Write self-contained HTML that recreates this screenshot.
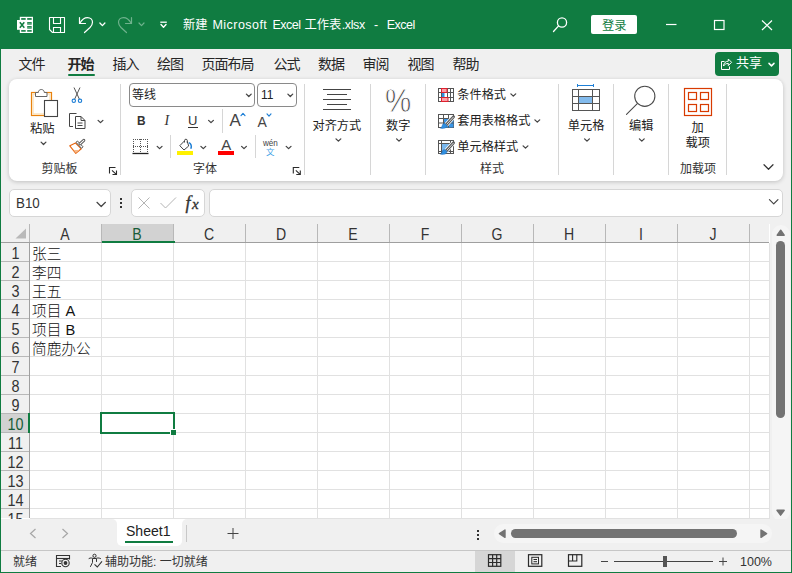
<!DOCTYPE html>
<html lang="zh-CN">
<head>
<meta charset="utf-8">
<title>新建 Microsoft Excel 工作表.xlsx - Excel</title>
<style>
*{box-sizing:border-box;margin:0;padding:0}
html,body{width:792px;height:573px;overflow:hidden;background:#f0f0f0}
body{font-family:"Liberation Sans","Noto Sans CJK SC",sans-serif;color:#262626;font-size:13px}
#app{position:absolute;left:0;top:0;width:792px;height:573px;background:#f0f0f0;overflow:hidden}
.abs{position:absolute}
.t{position:absolute;white-space:nowrap;line-height:1}
svg{position:absolute;overflow:visible}
#bl{left:0;top:0;width:1px;height:573px;background:#107c41}
#br{left:791px;top:0;width:1px;height:573px;background:#107c41}
#bb{left:0;top:572px;width:792px;height:1px;background:#107c41}
#title{left:0;top:0;width:792px;height:49px;background:#107c41}
#title .t{color:#fff}
.tab{font-size:13px;color:#262626}
#ribbon{left:9px;top:79px;width:774px;height:102px;background:#fff;border-radius:8px;box-shadow:0 1px 4px rgba(0,0,0,.2)}
.sep{position:absolute;width:1px;background:#d6d6d6}
.inp{position:absolute;background:#fff;border:1px solid #8a8a8a;border-radius:4px}
.fbox{position:absolute;background:#fff;border:1px solid #d6d6d6;border-radius:5px}
#grid{left:1px;top:224px;width:769px;height:295px;background:#fff;overflow:hidden}
.ch{position:absolute;top:0;height:18px;font-size:16px;color:#333;text-align:center;line-height:21px;transform:scaleX(.88)}
.rh{position:absolute;left:0;width:29px;height:19px;font-size:16px;color:#333;text-align:center;line-height:21px;transform:scaleX(.9)}
.cell{position:absolute;font-size:14.67px;color:#111;font-weight:300;line-height:1;white-space:nowrap}
.vl{top:19px;width:1px;height:275px;background:#e1e1e1}
.hl{left:29px;height:1px;width:739px;background:#e1e1e1}
.hvl{top:0;width:1px;height:18px;background:#b8b8b8}
.hhl{left:0;height:1px;width:28px;background:#b8b8b8}
</style>
</head>
<body>
<div id="app">
<!-- TITLE BAR -->
<div id="title" class="abs">
<svg style="left:0;top:0" width="1" height="1"><rect x="19.800" y="16.800" width="13.200" height="16.200" fill="#fff"/><rect x="21.2" y="18.1" width="4.500" height="1.7" fill="#107c41"/><rect x="21.2" y="22.1" width="4.500" height="2.5" fill="#107c41"/><rect x="21.2" y="26.1" width="4.500" height="2.5" fill="#107c41"/><rect x="21.2" y="30.1" width="4.500" height="1.6" fill="#107c41"/><rect x="27.2" y="18.1" width="4.500" height="1.7" fill="#107c41"/><rect x="27.2" y="22.1" width="4.500" height="2.5" fill="#107c41"/><rect x="27.2" y="26.1" width="4.500" height="2.5" fill="#107c41"/><rect x="27.2" y="30.1" width="4.500" height="1.6" fill="#107c41"/><rect x="27.200" y="23.1" width="4.500" height=".500" fill="#9fd0b4"/><rect x="27.200" y="27.1" width="4.500" height=".500" fill="#9fd0b4"/><rect x="17" y="20" width="9.800" height="9.800" fill="#fff"/><path d="M19.800 22.200L24.300 27.800M24.300 22.200L19.800 27.800" stroke="#107c41" stroke-width="1.500" fill="none"/></svg><svg style="left:0;top:0" width="1" height="1"><path d="M49.5 17.5H64.5V32.5H52.5L49.5 29.5Z" fill="none" stroke="#fff" stroke-width="1.1" stroke-linejoin="round"/><path d="M53.5 17.5V23.5H60.5V17.5" fill="none" stroke="#fff" stroke-width="1.1"/><path d="M53.5 32.5V27.5H60.5V32.5" fill="none" stroke="#fff" stroke-width="1.1"/></svg><svg style="left:0;top:0" width="1" height="1"><path d="M79.5 17.5V23.5H85.5" fill="none" stroke="#fff" stroke-width="1.2" stroke-linecap="round" stroke-linejoin="round"/><path d="M79.8 23.3C82 19.5 85 17.6 87.5 17.6C90.5 17.6 92.5 19.8 92.5 22.3C92.5 24.5 91.5 26 90 27.5L84.5 32.5" fill="none" stroke="#fff" stroke-width="1.2" stroke-linecap="round"/></svg><svg style="left:0;top:0" width="1" height="1"><path d="M99.90 23.00 L102.40 25.60 L104.90 23.00" fill="none" stroke="#fff" stroke-width="1.3" stroke-linecap="round" stroke-linejoin="round"/></svg><svg style="left:0;top:0" width="1" height="1"><path d="M131.5 17.5V23.5H125.5" fill="none" stroke="#6fb28d" stroke-width="1.2" stroke-linecap="round" stroke-linejoin="round"/><path d="M131.2 23.3C129 19.5 126 17.6 123.5 17.6C120.5 17.6 118.5 19.8 118.5 22.3C118.5 24.5 119.5 26 121 27.5L126.5 32.5" fill="none" stroke="#6fb28d" stroke-width="1.2" stroke-linecap="round"/></svg><svg style="left:0;top:0" width="1" height="1"><path d="M139.00 23.00 L141.50 25.60 L144.00 23.00" fill="none" stroke="#6fb28d" stroke-width="1.2" stroke-linecap="round" stroke-linejoin="round"/></svg><svg style="left:0;top:0" width="1" height="1"><path d="M160.300 22.200H166.800" stroke="#fff" stroke-width="1.3" fill="none"/></svg><svg style="left:0;top:0" width="1" height="1"><path d="M161.00 24.60 L163.50 27.20 L166.00 24.60" fill="none" stroke="#fff" stroke-width="1.4" stroke-linecap="round" stroke-linejoin="round"/></svg><div class="t" style="left:183px;top:18.5px;font-size:12.3px;">新建</div><div class="t" style="left:212.5px;top:18.5px;font-size:12.5px;letter-spacing:.45px;">Microsoft</div><div class="t" style="left:272.5px;top:18.5px;font-size:12.5px;letter-spacing:-.54px;">Excel</div><div class="t" style="left:304.5px;top:18.5px;font-size:12.3px;">工作表</div><div class="t" style="left:341.8px;top:18.5px;font-size:12.5px;letter-spacing:-.4px;">.xlsx</div><div class="t" style="left:374px;top:18.5px;font-size:12.5px;">-</div><div class="t" style="left:386.8px;top:18.5px;font-size:12.5px;letter-spacing:-.54px;">Excel</div><svg style="left:0;top:0" width="1" height="1"><circle cx="562" cy="22.5" r="4.6" fill="none" stroke="#fff" stroke-width="1.3"/><path d="M558.6 25.9L553.5 31.5" stroke="#fff" stroke-width="1.3" stroke-linecap="round"/></svg><div class="abs" style="left:591px;top:15px;width:46px;height:18.5px;background:#fff;border-radius:2px"></div><div class="t" style="left:602px;top:19.5px;font-size:12.3px;color:#107c41;">登录</div><svg style="left:0;top:0" width="1" height="1"><path d="M666 24.5H676.5" stroke="#fff" stroke-width="1.2"/><rect x="714.5" y="20.5" width="9.5" height="9" fill="none" stroke="#fff" stroke-width="1.2"/><path d="M762 20.5L772 30M772 20.5L762 30" stroke="#fff" stroke-width="1.2"/></svg></div>
<!-- TAB ROW -->
<div class="t" style="left:18.5px;top:57.3px;font-size:14px;color:#262626;letter-spacing:-1px;">文件</div><div class="t" style="left:67.5px;top:57.3px;font-size:14px;color:#262626;font-weight:bold;letter-spacing:-1px;">开始</div><div class="t" style="left:112.5px;top:57.3px;font-size:14px;color:#262626;letter-spacing:-1px;">插入</div><div class="t" style="left:157.0px;top:57.3px;font-size:14px;color:#262626;letter-spacing:-1px;">绘图</div><div class="t" style="left:201.5px;top:57.3px;font-size:14px;color:#262626;letter-spacing:-1px;">页面布局</div><div class="t" style="left:273.5px;top:57.3px;font-size:14px;color:#262626;letter-spacing:-1px;">公式</div><div class="t" style="left:318.0px;top:57.3px;font-size:14px;color:#262626;letter-spacing:-1px;">数据</div><div class="t" style="left:362.5px;top:57.3px;font-size:14px;color:#262626;letter-spacing:-1px;">审阅</div><div class="t" style="left:407.5px;top:57.3px;font-size:14px;color:#262626;letter-spacing:-1px;">视图</div><div class="t" style="left:452.5px;top:57.3px;font-size:14px;color:#262626;letter-spacing:-1px;">帮助</div><div class="abs" style="left:68px;top:73.5px;width:26.5px;height:2.3px;background:#107c41;border-radius:1px"></div><div class="abs" style="left:715px;top:52px;width:64px;height:24px;background:#107c41;border-radius:4px"></div><svg style="left:0;top:0" width="1" height="1"><path d="M724.5 61.5H721.5V69.5H729.5V66.5" fill="none" stroke="#fff" stroke-width="1"/><path d="M723.5 66C723.8 62.8 725.8 61.2 728.3 61.2V59L731.6 62.3L728.3 65.6V63.4C726.3 63.4 724.8 64.2 723.5 66Z" fill="none" stroke="#fff" stroke-width="1" stroke-linejoin="round"/></svg><div class="t" style="left:736px;top:56px;font-size:13px;color:#fff;">共享</div><svg style="left:0;top:0" width="1" height="1"><path d="M769.00 63.35 L771.50 65.85 L774.00 63.35" fill="none" stroke="#fff" stroke-width="1.5" stroke-linecap="round" stroke-linejoin="round"/></svg><!-- RIBBON -->
<div id="ribbon" class="abs"></div>
<svg style="left:0;top:0" width="1" height="1"><rect x="31.500" y="92.500" width="20" height="23" fill="#fff" stroke="#e8820e" stroke-width="1.2"/><rect x="33" y="94" width="17" height="20" fill="none" stroke="#fbdcae" stroke-width="1.2"/><path d="M35.500 96.500V92.500H38.300C38.300 88.500 44.300 88.500 44.300 92.500H47V96.500Z" fill="#fff" stroke="#666" stroke-width="1"/><rect x="44.5" y="100.500" width="13" height="16" fill="#fff" stroke="#444" stroke-width="1.1"/></svg><div class="t" style="left:30px;top:122.5px;font-size:12.3px;color:#222;">粘贴</div><svg style="left:0;top:0" width="1" height="1"><path d="M41.10 142.15 L43.50 144.45 L45.90 142.15" fill="none" stroke="#444" stroke-width="1.3" stroke-linecap="round" stroke-linejoin="round"/></svg><svg style="left:0;top:0" width="1" height="1"><path d="M74 87.500L79.300 99M80 87.500L74.700 99" stroke="#555" stroke-width="1" fill="none"/><circle cx="73.800" cy="100.800" r="1.700" fill="none" stroke="#1e7fd6" stroke-width="1.1"/><circle cx="80" cy="100.800" r="1.700" fill="none" stroke="#1e7fd6" stroke-width="1.1"/></svg><svg style="left:0;top:0" width="1" height="1"><path d="M73 126.500H69.500V113.500H76.500" fill="none" stroke="#444" stroke-width="1"/><path d="M75.500 116.500H81L85 120.500V128.500H75.500Z" fill="#fff" stroke="#444" stroke-width="1" stroke-linejoin="round"/><path d="M81 116.500V120.500H85" fill="none" stroke="#444" stroke-width="1"/><path d="M77.500 123H82.500M77.500 125.500H82.500" stroke="#444" stroke-width="1"/></svg><svg style="left:0;top:0" width="1" height="1"><path d="M98.10 120.35 L100.50 122.65 L102.90 120.35" fill="none" stroke="#444" stroke-width="1.3" stroke-linecap="round" stroke-linejoin="round"/></svg><svg style="left:0;top:0" width="1" height="1"><path d="M69.800 145.800L75.500 143L81.300 148.800L75.800 153.300Z" fill="#fff" stroke="#e8650e" stroke-width="1.1" stroke-linejoin="round"/><path d="M73.500 150L79.500 150L75.800 153Z" fill="#f7b98a" stroke="none"/><path d="M76 142.300L77.500 141L83 146.800L81.500 148.300Z" fill="#fff" stroke="#555" stroke-width="1" stroke-linejoin="round"/><path d="M80 143.800L83.800 140.300" stroke="#555" stroke-width="3" stroke-linecap="round"/><path d="M80 143.800L83.800 140.300" stroke="#fff" stroke-width="1.1" stroke-linecap="round"/></svg><div class="t" style="left:41.5px;top:163px;font-size:12px;color:#333;">剪贴板</div><svg style="left:0;top:0" width="1" height="1"><path d="M109.5 173.5V167.5H115.5" fill="none" stroke="#2a2a2a" stroke-width="1.1"/><path d="M112.0 170.3L116.3 174.3M116.5 170.5V174.5H112.5" fill="none" stroke="#2a2a2a" stroke-width="1.1"/></svg><div class="sep" style="left:120px;top:84px;height:91px"></div><div class="inp" style="left:129px;top:83px;width:126px;height:24px"></div><div class="t" style="left:132px;top:89px;font-size:12px;color:#222;">等线</div><svg style="left:0;top:0" width="1" height="1"><path d="M246.40 94.15 L248.80 96.45 L251.20 94.15" fill="none" stroke="#444" stroke-width="1.3" stroke-linecap="round" stroke-linejoin="round"/></svg><div class="inp" style="left:257px;top:83px;width:40px;height:24px"></div><div class="t" style="left:261px;top:89px;font-size:12px;color:#222;">11</div><svg style="left:0;top:0" width="1" height="1"><path d="M287.90 94.15 L290.30 96.45 L292.70 94.15" fill="none" stroke="#444" stroke-width="1.3" stroke-linecap="round" stroke-linejoin="round"/></svg><div class="t" style="left:137px;top:113.5px;font-size:13.5px;color:#333;font-weight:bold;transform-origin:0 0;transform:scaleX(.88);">B</div><div class="t" style="left:164.5px;top:113.5px;font-size:14px;color:#333;font-style:italic;font-family:'Liberation Serif',serif;">I</div><div class="t" style="left:188px;top:114px;font-size:13px;color:#333;">U</div><div class="abs" style="left:187.5px;top:127px;width:10px;height:1px;background:#333;"></div><svg style="left:0;top:0" width="1" height="1"><path d="M208.60 120.35 L211.00 122.65 L213.40 120.35" fill="none" stroke="#444" stroke-width="1.3" stroke-linecap="round" stroke-linejoin="round"/></svg><div class="sep" style="left:222px;top:109px;height:24px"></div><div class="t" style="left:229.5px;top:111.5px;font-size:17px;color:#444;">A</div><svg style="left:0;top:0" width="1" height="1"><path d="M241.00 115.60 L243.00 113.40 L245.00 115.60" fill="none" stroke="#1e7fd6" stroke-width="1.2" stroke-linecap="round" stroke-linejoin="round"/></svg><div class="t" style="left:257.5px;top:114.5px;font-size:14px;color:#444;">A</div><svg style="left:0;top:0" width="1" height="1"><path d="M267.00 113.90 L269.00 116.10 L271.00 113.90" fill="none" stroke="#1e7fd6" stroke-width="1.2" stroke-linecap="round" stroke-linejoin="round"/></svg><svg style="left:0;top:0" width="1" height="1"><path d="M133.500 139V153M147.500 139V153M133 139.500H148M140.500 139V153M133 146.500H148" stroke="#555" stroke-width="1" stroke-dasharray="1 1" fill="none"/><path d="M132.500 153.500H148.500" stroke="#222" stroke-width="1.3"/></svg><svg style="left:0;top:0" width="1" height="1"><path d="M157.20 146.35 L159.60 148.65 L162.00 146.35" fill="none" stroke="#444" stroke-width="1.3" stroke-linecap="round" stroke-linejoin="round"/></svg><div class="sep" style="left:170px;top:135px;height:23px"></div><svg style="left:0;top:0" width="1" height="1"><path d="M184.600 140.800L179.800 145.700L184 150L188.700 146L187.300 141.500" fill="#fff" stroke="#444" stroke-width="1" stroke-linejoin="round"/><path d="M184.500 142.500V140.500C184.500 138.800 187.300 138.800 187.300 140.500V143" fill="none" stroke="#444" stroke-width="1"/><path d="M188.800 142.600C191 143.300 192 146 190.800 148.800" fill="none" stroke="#1e7fd6" stroke-width="1.5"/><rect x="177" y="151" width="16" height="4" fill="#fff100"/></svg><svg style="left:0;top:0" width="1" height="1"><path d="M200.90 146.35 L203.30 148.65 L205.70 146.35" fill="none" stroke="#444" stroke-width="1.3" stroke-linecap="round" stroke-linejoin="round"/></svg><div class="t" style="left:221.3px;top:137.3px;font-size:15px;color:#444;">A</div><div class="abs" style="left:218px;top:151px;width:16px;height:4px;background:#f00;"></div><svg style="left:0;top:0" width="1" height="1"><path d="M241.60 146.35 L244.00 148.65 L246.40 146.35" fill="none" stroke="#444" stroke-width="1.3" stroke-linecap="round" stroke-linejoin="round"/></svg><div class="sep" style="left:255px;top:135px;height:23px"></div><div class="t" style="left:262.5px;top:138.8px;font-size:9px;color:#444;transform-origin:0 0;transform:scaleX(.9);">wén</div><div class="t" style="left:266px;top:147.6px;font-size:8.5px;color:#3f9fe6;">文</div><svg style="left:0;top:0" width="1" height="1"><path d="M286.20 146.35 L288.60 148.65 L291.00 146.35" fill="none" stroke="#444" stroke-width="1.3" stroke-linecap="round" stroke-linejoin="round"/></svg><div class="t" style="left:193px;top:163px;font-size:12px;color:#333;">字体</div><svg style="left:0;top:0" width="1" height="1"><path d="M293.3 173.5V167.5H299.3" fill="none" stroke="#2a2a2a" stroke-width="1.1"/><path d="M295.8 170.3L300.1 174.3M300.3 170.5V174.5H296.3" fill="none" stroke="#2a2a2a" stroke-width="1.1"/></svg><div class="sep" style="left:304px;top:84px;height:91px"></div><svg style="left:0;top:0" width="1" height="1"><path d="M323 89.500H351M327 94.500H347M323 99.500H351M327 104.500H347M323 109.500H351" stroke="#444" stroke-width="1" fill="none"/></svg><div class="t" style="left:312.5px;top:120px;font-size:12.2px;color:#222;">对齐方式</div><svg style="left:0;top:0" width="1" height="1"><path d="M336.00 138.85 L338.40 141.15 L340.80 138.85" fill="none" stroke="#444" stroke-width="1.3" stroke-linecap="round" stroke-linejoin="round"/></svg><div class="sep" style="left:370px;top:84px;height:91px"></div><div class="t" style="left:385.2px;top:83.5px;font-size:33.5px;color:#3a3a3a;-webkit-text-stroke:.9px #fff;transform-origin:0 0;transform:scaleX(.88);">%</div><div class="t" style="left:386px;top:120px;font-size:12.2px;color:#222;">数字</div><svg style="left:0;top:0" width="1" height="1"><path d="M396.60 138.85 L399.00 141.15 L401.40 138.85" fill="none" stroke="#444" stroke-width="1.3" stroke-linecap="round" stroke-linejoin="round"/></svg><div class="sep" style="left:425px;top:84px;height:91px"></div><svg style="left:0;top:0" width="1" height="1"><rect x="438.500" y="88.500" width="15" height="13" fill="#fff" stroke="#555" stroke-width="1"/><path d="M438.500 92.500H453.500M438.500 97.500H453.500M441.500 88.500V101.500M447.500 88.500V101.500M450.500 88.500V101.500" stroke="#555" stroke-width="1"/><rect x="441.500" y="88.500" width="5.500" height="4" fill="#f8a0a8" stroke="#e0202e" stroke-width="1"/><rect x="441.500" y="97.500" width="6.500" height="4" fill="#f8a0a8" stroke="#e0202e" stroke-width="1"/><rect x="442" y="93" width="2.500" height="4" fill="#2f8fe0"/></svg><div class="t" style="left:457.3px;top:89px;font-size:12.2px;color:#222;">条件格式</div><svg style="left:0;top:0" width="1" height="1"><path d="M510.90 93.85 L513.30 96.15 L515.70 93.85" fill="none" stroke="#444" stroke-width="1.3" stroke-linecap="round" stroke-linejoin="round"/></svg><svg style="left:0;top:0" width="1" height="1"><rect x="438.500" y="114.500" width="15" height="13" fill="#fff" stroke="#555" stroke-width="1"/><rect x="444" y="119" width="9.500" height="8.500" fill="#3a96e6"/><path d="M438.500 118.500H453.500M438.500 123H453.500M443.500 114.500V127.500M448.500 114.500V127.500" stroke="#555" stroke-width="1"/><path d="M446.300 124.8L453.600 116.8" stroke="#fff" stroke-width="4.4" stroke-linecap="butt"/><path d="M446.300 124.8L453.600 116.8" stroke="#5a5a5a" stroke-width="2.8" stroke-linecap="round"/><path d="M446.800 124.3L453.300 117.2" stroke="#e8e8e8" stroke-width=".9" stroke-linecap="round"/><path d="M443 124.0C444.300 123.3 446.300 124.0 446.800 125.5C447.300 127.5 444.500 128.8 440.500 128.3C442 127.3 442 125.3 443 124.0Z" fill="#2f8fe0" stroke="#1e6fc0" stroke-width=".5"/></svg><div class="t" style="left:457.3px;top:115px;font-size:12.2px;color:#222;">套用表格格式</div><svg style="left:0;top:0" width="1" height="1"><path d="M534.90 119.85 L537.30 122.15 L539.70 119.85" fill="none" stroke="#444" stroke-width="1.3" stroke-linecap="round" stroke-linejoin="round"/></svg><svg style="left:0;top:0" width="1" height="1"><rect x="438.500" y="140.500" width="15" height="13" fill="#fff" stroke="#555" stroke-width="1"/><rect x="441.500" y="143.500" width="9" height="8" fill="#7ab8ee"/><path d="M438.500 143.500H453.500M441.500 140.500V153.500M450.500 140.500V153.500M438.500 151.500H453.500" stroke="#555" stroke-width="1"/><path d="M446.300 150.8L453.600 142.8" stroke="#fff" stroke-width="4.4" stroke-linecap="butt"/><path d="M446.300 150.8L453.600 142.8" stroke="#5a5a5a" stroke-width="2.8" stroke-linecap="round"/><path d="M446.800 150.3L453.300 143.2" stroke="#e8e8e8" stroke-width=".9" stroke-linecap="round"/><path d="M443 150.0C444.300 149.3 446.300 150.0 446.800 151.5C447.300 153.5 444.500 154.8 440.500 154.3C442 153.3 442 151.3 443 150.0Z" fill="#2f8fe0" stroke="#1e6fc0" stroke-width=".5"/></svg><div class="t" style="left:457.3px;top:141px;font-size:12.2px;color:#222;">单元格样式</div><svg style="left:0;top:0" width="1" height="1"><path d="M523.10 145.85 L525.50 148.15 L527.90 145.85" fill="none" stroke="#444" stroke-width="1.3" stroke-linecap="round" stroke-linejoin="round"/></svg><div class="t" style="left:480px;top:162.5px;font-size:12px;color:#333;">样式</div><div class="sep" style="left:558px;top:84px;height:91px"></div><svg style="left:0;top:0" width="1" height="1"><path d="M577 85.500H594M577.500 84V87M593.500 84V87" stroke="#1e7fd6" stroke-width="1" fill="none"/><rect x="572.500" y="89.500" width="27" height="21" fill="#fff" stroke="#555" stroke-width="1"/><path d="M572.500 96.500H599.500M572.500 103.500H599.500M578.500 89.500V110.500M592.500 89.500V110.500" stroke="#555" stroke-width="1"/><rect x="579" y="97" width="13" height="6" fill="#83bbed"/></svg><div class="t" style="left:567.8px;top:120px;font-size:12.2px;color:#222;">单元格</div><svg style="left:0;top:0" width="1" height="1"><path d="M584.60 138.85 L587.00 141.15 L589.40 138.85" fill="none" stroke="#444" stroke-width="1.3" stroke-linecap="round" stroke-linejoin="round"/></svg><div class="sep" style="left:613px;top:84px;height:91px"></div><svg style="left:0;top:0" width="1" height="1"><circle cx="644.800" cy="96.300" r="10.100" fill="none" stroke="#4a4a4a" stroke-width="1.1"/><path d="M637.300 103.600L626.500 114.400" stroke="#4a4a4a" stroke-width="1.1" stroke-linecap="round"/></svg><div class="t" style="left:629px;top:120px;font-size:12.2px;color:#222;">编辑</div><svg style="left:0;top:0" width="1" height="1"><path d="M639.40 138.85 L641.80 141.15 L644.20 138.85" fill="none" stroke="#444" stroke-width="1.3" stroke-linecap="round" stroke-linejoin="round"/></svg><div class="sep" style="left:668px;top:84px;height:91px"></div><svg style="left:0;top:0" width="1" height="1"><rect x="684.500" y="88.500" width="27" height="27" fill="#fff" stroke="#d83b01" stroke-width="1.2"/><rect x="688.5" y="92.5" width="8" height="7" fill="none" stroke="#d83b01" stroke-width="1.2"/><rect x="688.5" y="104.5" width="8" height="7" fill="none" stroke="#d83b01" stroke-width="1.2"/><rect x="700.5" y="92.5" width="8" height="7" fill="none" stroke="#d83b01" stroke-width="1.2"/><rect x="700.5" y="104.5" width="8" height="7" fill="none" stroke="#d83b01" stroke-width="1.2"/></svg><div class="t" style="left:691.5px;top:122px;font-size:12.2px;color:#222;">加</div><div class="t" style="left:685.5px;top:136.5px;font-size:12.2px;color:#222;">载项</div><div class="t" style="left:680px;top:162.5px;font-size:12px;color:#333;">加载项</div><div class="sep" style="left:726px;top:84px;height:91px"></div><svg style="left:0;top:0" width="1" height="1"><path d="M764.00 164.75 L768.50 169.25 L773.00 164.75" fill="none" stroke="#333" stroke-width="1.2" stroke-linecap="round" stroke-linejoin="round"/></svg><!-- FORMULA BAR -->
<div class="fbox" style="left:9px;top:189px;width:102px;height:27.5px"></div><div class="t" style="left:16.3px;top:195.3px;font-size:15px;color:#333;transform-origin:0 0;transform:scaleX(.89);">B10</div><svg style="left:0;top:0" width="1" height="1"><path d="M96.95 202.30 L101.20 206.50 L105.45 202.30" fill="none" stroke="#444" stroke-width="1.2" stroke-linecap="round" stroke-linejoin="round"/></svg><div class="abs" style="left:120px;top:198px;width:2px;height:2px;background:#333;"></div><div class="abs" style="left:120px;top:202px;width:2px;height:2px;background:#333;"></div><div class="abs" style="left:120px;top:206px;width:2px;height:2px;background:#333;"></div><div class="fbox" style="left:131px;top:189px;width:73.5px;height:27.5px"></div><svg style="left:0;top:0" width="1" height="1"><path d="M138.500 197.500L149.500 208.500M149.500 197.500L138.500 208.500" stroke="#b4b4b4" stroke-width="1" fill="none"/><path d="M160.500 203L165.500 208L176 197.500" stroke="#b4b4b4" stroke-width="1" fill="none"/></svg><div class="t" style="left:185.5px;top:193.5px;font-size:18px;color:#333;-webkit-text-stroke:.35px #333;font-style:italic;font-family:'Liberation Serif',serif;">f</div><div class="t" style="left:192px;top:196.5px;font-size:15px;color:#333;-webkit-text-stroke:.35px #333;font-style:italic;font-family:'Liberation Serif',serif;">x</div><div class="fbox" style="left:209px;top:189px;width:573.5px;height:27.5px"></div><svg style="left:0;top:0" width="1" height="1"><path d="M769.45 199.65 L773.70 203.95 L777.95 199.65" fill="none" stroke="#444" stroke-width="1.2" stroke-linecap="round" stroke-linejoin="round"/></svg><!-- GRID -->
<div id="grid" class="abs">
<div class="abs" style="left:0;top:0;width:768px;height:18px;background:#f0f0f0"></div>
<div class="abs" style="left:0;top:18px;width:29px;height:276px;background:#f0f0f0"></div>
<div class="abs" style="left:101px;top:0;width:72px;height:18px;background:#d2d2d2"></div>
<div class="abs" style="left:0;top:190px;width:28px;height:19px;background:#d2d2d2"></div>
<div class="abs vl" style="left:100px"></div>
<div class="abs vl" style="left:172px"></div>
<div class="abs vl" style="left:244px"></div>
<div class="abs vl" style="left:316px"></div>
<div class="abs vl" style="left:388px"></div>
<div class="abs vl" style="left:460px"></div>
<div class="abs vl" style="left:532px"></div>
<div class="abs vl" style="left:604px"></div>
<div class="abs vl" style="left:676px"></div>
<div class="abs vl" style="left:748px"></div>
<div class="abs hl" style="top:37px"></div>
<div class="abs hl" style="top:56px"></div>
<div class="abs hl" style="top:75px"></div>
<div class="abs hl" style="top:94px"></div>
<div class="abs hl" style="top:113px"></div>
<div class="abs hl" style="top:132px"></div>
<div class="abs hl" style="top:151px"></div>
<div class="abs hl" style="top:170px"></div>
<div class="abs hl" style="top:189px"></div>
<div class="abs hl" style="top:208px"></div>
<div class="abs hl" style="top:227px"></div>
<div class="abs hl" style="top:246px"></div>
<div class="abs hl" style="top:265px"></div>
<div class="abs hl" style="top:284px"></div>
<div class="abs hvl" style="left:28px"></div>
<div class="abs hvl" style="left:100px"></div>
<div class="abs hvl" style="left:172px"></div>
<div class="abs hvl" style="left:244px"></div>
<div class="abs hvl" style="left:316px"></div>
<div class="abs hvl" style="left:388px"></div>
<div class="abs hvl" style="left:460px"></div>
<div class="abs hvl" style="left:532px"></div>
<div class="abs hvl" style="left:604px"></div>
<div class="abs hvl" style="left:676px"></div>
<div class="abs hvl" style="left:748px"></div>
<div class="abs hhl" style="top:37px"></div>
<div class="abs hhl" style="top:56px"></div>
<div class="abs hhl" style="top:75px"></div>
<div class="abs hhl" style="top:94px"></div>
<div class="abs hhl" style="top:113px"></div>
<div class="abs hhl" style="top:132px"></div>
<div class="abs hhl" style="top:151px"></div>
<div class="abs hhl" style="top:170px"></div>
<div class="abs hhl" style="top:189px"></div>
<div class="abs hhl" style="top:208px"></div>
<div class="abs hhl" style="top:227px"></div>
<div class="abs hhl" style="top:246px"></div>
<div class="abs hhl" style="top:265px"></div>
<div class="abs hhl" style="top:284px"></div>
<div class="abs" style="left:0;top:18px;width:768px;height:1px;background:#9f9f9f"></div>
<div class="abs" style="left:28px;top:18px;width:1px;height:276px;background:#9f9f9f"></div>
<div class="abs" style="left:768px;top:19px;width:1px;height:276px;background:#e1e1e1"></div>
<div class="abs" style="left:29px;top:294px;width:740px;height:1px;background:#e1e1e1"></div>
<svg style="left:0;top:0" width="1" height="1"><path d="M25 4.500V14.500H14.500Z" fill="#b9b9b9"/></svg>
<div class="abs" style="left:101px;top:17px;width:73px;height:2px;background:#107c41"></div>
<div class="abs" style="left:27px;top:189px;width:2px;height:20px;background:#107c41"></div>
<div class="ch" style="left:28px;width:72px;color:#333">A</div>
<div class="ch" style="left:100px;width:72px;color:#185c37">B</div>
<div class="ch" style="left:172px;width:72px;color:#333">C</div>
<div class="ch" style="left:244px;width:72px;color:#333">D</div>
<div class="ch" style="left:316px;width:72px;color:#333">E</div>
<div class="ch" style="left:388px;width:72px;color:#333">F</div>
<div class="ch" style="left:460px;width:72px;color:#333">G</div>
<div class="ch" style="left:532px;width:72px;color:#333">H</div>
<div class="ch" style="left:604px;width:72px;color:#333">I</div>
<div class="ch" style="left:676px;width:72px;color:#333">J</div>
<div class="rh" style="top:19px;color:#333">1</div>
<div class="rh" style="top:38px;color:#333">2</div>
<div class="rh" style="top:57px;color:#333">3</div>
<div class="rh" style="top:76px;color:#333">4</div>
<div class="rh" style="top:95px;color:#333">5</div>
<div class="rh" style="top:114px;color:#333">6</div>
<div class="rh" style="top:133px;color:#333">7</div>
<div class="rh" style="top:152px;color:#333">8</div>
<div class="rh" style="top:171px;color:#333">9</div>
<div class="rh" style="top:190px;color:#185c37">10</div>
<div class="rh" style="top:209px;color:#333">11</div>
<div class="rh" style="top:228px;color:#333">12</div>
<div class="rh" style="top:247px;color:#333">13</div>
<div class="rh" style="top:266px;color:#333">14</div>
<div class="rh" style="top:285px;color:#333">15</div>
<div class="cell" style="left:31px;top:23px">张三</div>
<div class="cell" style="left:31px;top:42px">李四</div>
<div class="cell" style="left:31px;top:61px">王五</div>
<div class="cell" style="left:31px;top:80px">项目 A</div>
<div class="cell" style="left:31px;top:99px">项目 B</div>
<div class="cell" style="left:31px;top:118px">简鹿办公</div>
<div class="abs" style="left:99px;top:188px;width:75px;height:22px;border:2px solid #107c41"></div>
<div class="abs" style="left:169px;top:205px;width:5px;height:5px;background:#107c41;border:1px solid #fff;box-sizing:content-box;border-right:0;border-bottom:0"></div>
</div>
<div class="abs" style="left:772px;top:225px;width:18px;height:296px;background:#f5f5f5;border-radius:9px"></div><svg style="left:0;top:0" width="1" height="1"><path d="M777.200 235.200L780.700 230.200L784.200 235.200Z" fill="#737373" stroke="#737373" stroke-width="1.4" stroke-linejoin="round"/><path d="M777 510.300L780.600 515.200L784.200 510.300Z" fill="#737373" stroke="#737373" stroke-width="1.4" stroke-linejoin="round"/></svg><div class="abs" style="left:776px;top:240.5px;width:9px;height:177.5px;background:#737373;border-radius:4.5px"></div><!-- SHEET TABS -->
<div class="abs" style="left:1px;top:519px;width:790px;height:6px;background:#fff;"></div><div class="abs" style="left:1px;top:519px;width:115.5px;height:31px;background:#f0f0f0;border-radius:0 5px 0 0"></div><div class="abs" style="left:181.5px;top:519px;width:609.5px;height:31px;background:#f0f0f0;border-radius:5px 0 0 0"></div><div class="abs" style="left:116.5px;top:519px;width:65px;height:27.3px;background:#fff;border-radius:0 0 5px 5px"></div><div class="t" style="left:126px;top:522.5px;font-size:15.5px;color:#222;transform-origin:0 0;transform:scaleX(.905);">Sheet1</div><div class="abs" style="left:124.8px;top:540.5px;width:48.3px;height:2px;background:#107c41;"></div><svg style="left:0;top:0" width="1" height="1"><path d="M35.500 529L30.500 533.500L35.500 538" fill="none" stroke="#a6a6a6" stroke-width="1.2"/><path d="M62.500 529L67.500 533.500L62.500 538" fill="none" stroke="#a6a6a6" stroke-width="1.2"/><path d="M227.500 533.500H238.500M233 528V539" fill="none" stroke="#444" stroke-width="1"/></svg><div class="abs" style="left:185.5px;top:525px;width:1px;height:17px;background:#c8c8c8;"></div><div class="abs" style="left:477px;top:530px;width:2px;height:2px;background:#333;"></div><div class="abs" style="left:477px;top:534px;width:2px;height:2px;background:#333;"></div><div class="abs" style="left:477px;top:538px;width:2px;height:2px;background:#333;"></div><div class="abs" style="left:494px;top:524px;width:278px;height:19px;background:#f5f5f5;border-radius:9.5px"></div><svg style="left:0;top:0" width="1" height="1"><path d="M505 530L499.400 533.600L505 537.300Z" fill="#737373" stroke="#737373" stroke-width="1.4" stroke-linejoin="round"/><path d="M761 530L766.600 533.600L761 537.300Z" fill="#737373" stroke="#737373" stroke-width="1.4" stroke-linejoin="round"/></svg><div class="abs" style="left:510.7px;top:528.7px;width:226.3px;height:9.5px;background:#737373;border-radius:5px"></div><!-- STATUS BAR -->
<div class="abs" style="left:1px;top:550px;width:790px;height:1px;background:#c6c6c6;"></div><div class="t" style="left:13px;top:555.5px;font-size:12px;color:#333;">就绪</div><svg style="left:0;top:0" width="1" height="1"><path d="M61 566.500H56.500V555.500H69.500V559.500" stroke="#333" stroke-width="1.1" fill="none"/><path d="M56.500 558.500H69.500" stroke="#333" stroke-width="1.1" fill="none"/><path d="M59 561H62M59 563.500H61" stroke="#333" stroke-width="1" fill="none"/><circle cx="65.500" cy="563" r="3.700" fill="none" stroke="#333" stroke-width="1.1"/><circle cx="65.500" cy="563" r="1.900" fill="#333"/></svg><svg style="left:0;top:0" width="1" height="1"><circle cx="94.500" cy="555.800" r="1.600" fill="none" stroke="#333" stroke-width="1"/><path d="M89 558.500C90.500 557.500 92 558 93 558.500H96C97 558 98.500 557.500 100.500 558.500" stroke="#333" stroke-width="1" fill="none" stroke-linecap="round"/><path d="M92.500 559V562.500L90.500 566.500M96.500 559V561.500" stroke="#333" stroke-width="1" fill="none" stroke-linecap="round"/><path d="M94.500 564.300L97.300 567L102 561.300" stroke="#333" stroke-width="1.1" fill="none"/></svg><div class="t" style="left:105px;top:555.5px;font-size:12px;color:#333;">辅助功能: 一切就绪</div><div class="abs" style="left:475px;top:551px;width:40px;height:21px;background:#d6d6d6;"></div><svg style="left:0;top:0" width="1" height="1"><rect x="488.500" y="554.700" width="12.300" height="11.600" fill="none" stroke="#2a2a2a" stroke-width="1.2"/><path d="M488.500 558.600H500.800M488.500 562.500H500.800M492.600 554.700V566.300M496.700 554.700V566.300" stroke="#2a2a2a" stroke-width="1.2"/></svg><svg style="left:0;top:0" width="1" height="1"><rect x="528.500" y="554.700" width="13.300" height="11.600" fill="none" stroke="#2a2a2a" stroke-width="1.2"/><rect x="531.800" y="557.300" width="6.700" height="6.600" fill="none" stroke="#2a2a2a" stroke-width="1"/><path d="M533.500 559.500H537M533.500 561.700H537" stroke="#2a2a2a" stroke-width="1"/></svg><svg style="left:0;top:0" width="1" height="1"><rect x="568.500" y="554.700" width="13.300" height="11.600" fill="none" stroke="#2a2a2a" stroke-width="1.2"/><path d="M568.500 561H576.800V554.700M572.600 554.700V561" fill="none" stroke="#2a2a2a" stroke-width="1.1"/></svg><svg style="left:0;top:0" width="1" height="1"><path d="M601 561.500H608M614 561.500H713M719 561.500H727M723 557.500V565.500" stroke="#444" stroke-width="1" fill="none"/></svg><div class="abs" style="left:663px;top:556px;width:4px;height:11px;background:#555;"></div><div class="t" style="left:740px;top:555.5px;font-size:12.5px;color:#333;">100%</div><div id="bl" class="abs"></div><div id="br" class="abs"></div><div id="bb" class="abs"></div>
</div>
</body>
</html>
